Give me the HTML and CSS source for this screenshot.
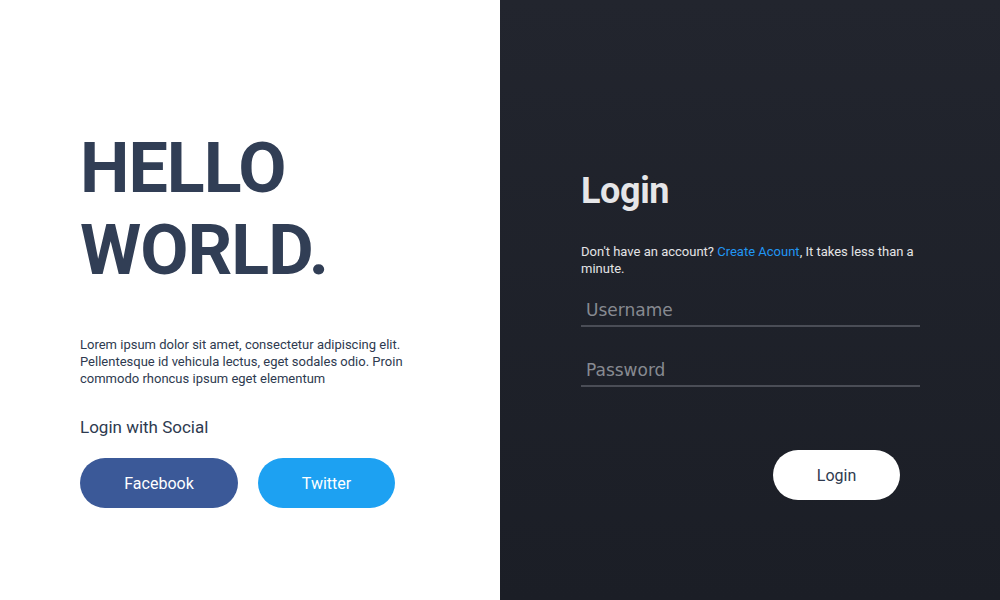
FILE: index.html
```html
<!DOCTYPE html>
<html>
<head>
<meta charset="utf-8">
<link rel="stylesheet" href="styles.css">
</head>
<body>
<main class="page">
  <section class="intro">
    <h1 class="hero">HELLO<br>WORLD.</h1>
    <p class="lead">Lorem ipsum dolor sit amet, consectetur adipiscing elit. Pellentesque id vehicula lectus, eget sodales odio. Proin commodo rhoncus ipsum eget elementum</p>
    <h2 class="social-title">Login with Social</h2>
    <div class="social">
      <button class="btn btn-facebook">Facebook</button>
      <button class="btn btn-twitter">Twitter</button>
    </div>
  </section>
  <section class="panel">
    <form class="login">
      <h2 class="login-title">Login</h2>
      <p class="login-note">Don't have an account? <a href="#" class="link">Create Acount</a>, It takes less than a minute.</p>
      <input class="field" type="text" placeholder="Username">
      <input class="field field-second" type="password" placeholder="Password">
      <button type="button" class="btn btn-login">Login</button>
    </form>
  </section>
</main>
</body>
</html>
```
FILE: styles.css
```css
* { box-sizing: border-box; }
html, body { margin: 0; padding: 0; }
body {
  font-family: Roboto, "Liberation Sans", sans-serif;
  width: 1000px;
  height: 600px;
  overflow: hidden;
}
.page {
  display: flex;
  width: 1000px;
  height: 600px;
}
.intro {
  width: 500px;
  background: #ffffff;
  padding: 127px 0 0 80px;
  display: flex;
  flex-direction: column;
  align-items: flex-start;
}
.hero {
  margin: 0;
  font-size: 70px;
  line-height: 82px;
  font-weight: 700;
  letter-spacing: -1px;
  color: #313e55;
}
.lead {
  margin: 45px 0 0;
  width: 330px;
  font-size: 13px;
  line-height: 17px;
  color: #2e3a4f;
}
.social-title {
  margin: 30px 0 0;
  font-size: 17px;
  line-height: 20px;
  font-weight: 400;
  color: #2e3a4f;
}
.social {
  display: flex;
  gap: 20px;
  margin-top: 21px;
}
.btn {
  height: 50px;
  border: none;
  border-radius: 25px;
  font-family: Roboto, "Liberation Sans", sans-serif;
  font-size: 16px;
  color: #ffffff;
  padding: 0;
  cursor: pointer;
}
.btn-facebook { width: 158px; background: #3b5998; }
.btn-twitter { width: 137px; background: #1da1f2; }
.panel {
  width: 500px;
  background: linear-gradient(180deg, #22252e 0%, #1b1e26 100%);
  padding: 170px 0 0 81px;
}
.login {
  width: 339px;
  display: flex;
  flex-direction: column;
}
.login-title {
  margin: 0;
  font-size: 36px;
  line-height: 42px;
  font-weight: 700;
  letter-spacing: -0.4px;
  color: #e6e6e8;
}
.login-note {
  margin: 31px 0 0;
  font-size: 13px;
  line-height: 17px;
  color: #e4e4e6;
}
.link { color: #2196f3; text-decoration: none; }
.field {
  margin-top: 17px;
  height: 33px;
  width: 339px;
  padding: 0 5px;
  background: transparent;
  border: none;
  border-bottom: 2px solid #4a4d56;
  outline: none;
  font-family: "DejaVu Sans", sans-serif;
  font-size: 17px;
  color: #d0d0d0;
}
.field::placeholder { color: #878a91; }
.field-second { margin-top: 27px; }
.btn-login {
  margin-top: 63px;
  align-self: flex-end;
  margin-right: 20px;
  width: 127px;
  background: #ffffff;
  color: #2e3a4f;
  font-size: 16px;
}
```
